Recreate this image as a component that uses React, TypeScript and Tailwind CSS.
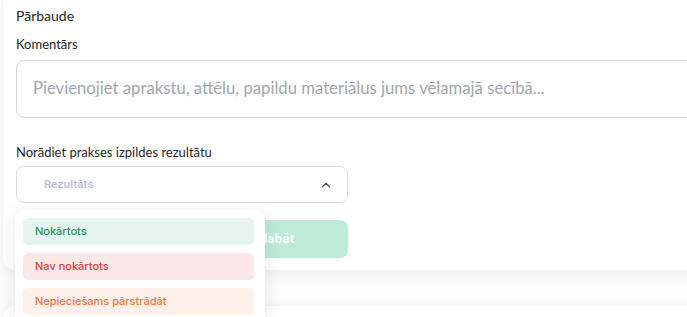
import { ChevronUp } from 'lucide-react'

const options = [
  { label: 'Nokārtots', className: 'bg-[#e5f4ee] text-[#24976a]' },
  { label: 'Nav nokārtots', className: 'bg-[#fbe8e7] text-[#dc3f47]' },
  { label: 'Nepieciešams pārstrādāt', className: 'bg-[#fff0e9] text-[#f7763c]' },
]

export default function App() {
  return (
    <div className="relative h-[317px] w-[687px] overflow-hidden bg-[#fcfcfd] font-['Lato',sans-serif]">
      <div className="-mt-[12px] ml-[3px] w-[720px] rounded-b-[12px] bg-white pb-[12px] pl-[13px] pt-[18px] shadow-[0_6px_16px_-6px_rgba(30,40,80,0.12)]">
        <h3 className="text-[14px] leading-[20px] text-[#1f1f1f]">Pārbaude</h3>
        <label className="mt-[9px] block text-[13px] leading-[18px] text-[#1f1f1f]">Komentārs</label>
        <div className="mt-[7px] flex h-[58px] items-center rounded-[8px] border border-[#d9d9d9] bg-white pl-[16px]">
          <span className="text-[16.7px] text-[#a3a6ad]">
            Pievienojiet aprakstu, attēlu, papildu materiālus jums vēlamajā secībā...
          </span>
        </div>
        <label className="mt-[25px] block text-[13px] leading-[18px] text-[#1f1f1f]">
          Norādiet prakses izpildes rezultātu
        </label>
        <div className="mt-[5px] flex h-[37px] w-[332px] items-center justify-between rounded-[8px] border border-[#dedbea] bg-white pl-[27px] pr-[14px]">
          <span className="font-['Inter',sans-serif] text-[11px] font-semibold text-[#bcc2d3]">Rezultāts</span>
          <ChevronUp className="size-[14px] text-[#4b4f5c]" strokeWidth={2} />
        </div>
        <div className="mt-[17px] flex w-[332px] gap-[8px]">
          <button className="h-[38px] flex-1 rounded-[8px] border border-[#d9d9d9] bg-white font-['Inter',sans-serif] text-[12px] font-semibold text-[#1f1f1f]">
            Atcelt
          </button>
          <button className="h-[38px] flex-1 rounded-[8px] bg-[#bdebd7] font-['Inter',sans-serif] text-[12.5px] font-bold text-white">
            Saglabāt
          </button>
        </div>
      </div>
      <div className="ml-[3px] mt-[36px] h-[40px] w-[720px] rounded-t-[12px] bg-white shadow-[0_-2px_10px_-4px_rgba(30,40,80,0.08)]" />

      <div className="absolute left-[15px] top-[210px] w-[250px] rounded-[8px] bg-white pb-[10px] pl-[8px] pr-[11px] pt-[8px] shadow-[0_4px_18px_rgba(30,40,80,0.10)]">
        <ul className="grid gap-[8px]">
          {options.map((o) => (
            <li
              key={o.label}
              className={`flex h-[27px] items-center rounded-[5px] pl-[12px] font-['Inter',sans-serif] text-[11px] font-medium ${o.className}`}
            >
              {o.label}
            </li>
          ))}
        </ul>
      </div>
    </div>
  )
}
